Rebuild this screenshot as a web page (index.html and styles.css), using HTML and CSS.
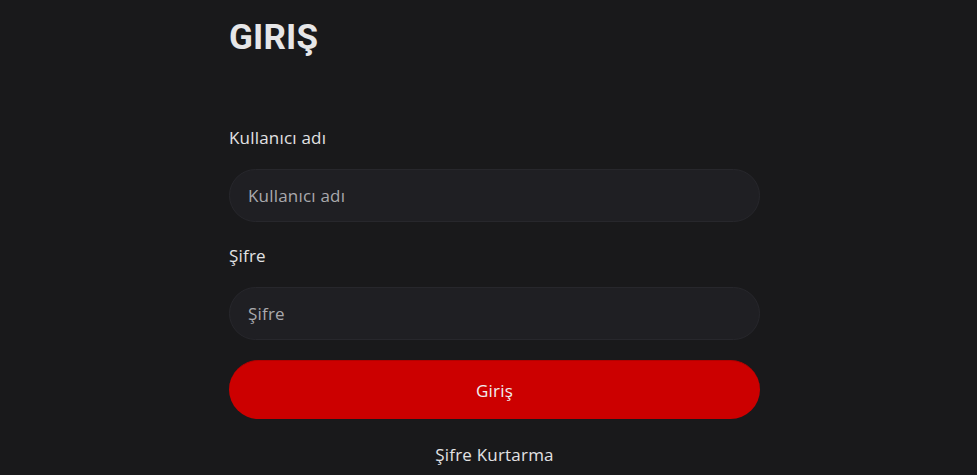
FILE: index.html
```html
<!DOCTYPE html>
<html lang="tr">
<head>
<meta charset="utf-8">
<title>Giriş</title>
<link rel="stylesheet" href="styles.css">
</head>
<body>
<main class="page">
  <form class="login">
    <h1 class="title">GIRIŞ</h1>
    <label class="label label-first" for="user">Kullanıcı adı</label>
    <input class="field" id="user" type="text" placeholder="Kullanıcı adı">
    <label class="label" for="pass">Şifre</label>
    <input class="field" id="pass" type="password" placeholder="Şifre">
    <button class="submit" type="button">Giriş</button>
    <a class="recover" href="#">Şifre Kurtarma</a>
  </form>
</main>
</body>
</html>
```
FILE: styles.css
```css
html, body {
  margin: 0;
  padding: 0;
  background: #19191b;
  height: 100%;
  overflow: hidden;
}
body {
  font-family: "Open Sans", "Noto Sans", sans-serif;
  color: #e4e4e6;
}
.page {
  padding-left: 229px;
  padding-top: 14px;
}
.login {
  width: 531px;
  display: flex;
  flex-direction: column;
}
.title {
  margin: 0;
  font-family: "Roboto", sans-serif;
  font-weight: 700;
  font-size: 35px;
  line-height: 48px;
  height: 48px;
  letter-spacing: 0.2px;
  color: #e6e6e8;
}
.label {
  display: block;
  font-size: 17px;
  line-height: 20px;
  height: 20px;
  margin: 24px 0 21px;
  color: #e2e2e4;
  letter-spacing: 0.2px;
}
.label-first {
  margin-top: 66px;
}
.field {
  box-sizing: border-box;
  height: 53px;
  width: 100%;
  border: 1px solid #27272c;
  border-radius: 27px;
  background: #1f1f23;
  padding: 0 18px;
  font-family: inherit;
  font-size: 17px;
  letter-spacing: 0.2px;
  color: #e2e2e4;
  outline: none;
}
.field::placeholder {
  color: #a9a9ad;
}
.submit {
  box-sizing: border-box;
  margin-top: 20px;
  height: 59px;
  width: 100%;
  border: 0;
  border-top: 1px solid #b30000;
  border-radius: 30px;
  background: #cc0000;
  color: #f0f0f0;
  font-family: inherit;
  font-size: 17px;
  letter-spacing: 0.2px;
  font-weight: 500;
}
.recover {
  margin-top: 26px;
  align-self: center;
  font-size: 17px;
  letter-spacing: 0.2px;
  line-height: 20px;
  color: #e2e2e4;
  text-decoration: none;
}
```
